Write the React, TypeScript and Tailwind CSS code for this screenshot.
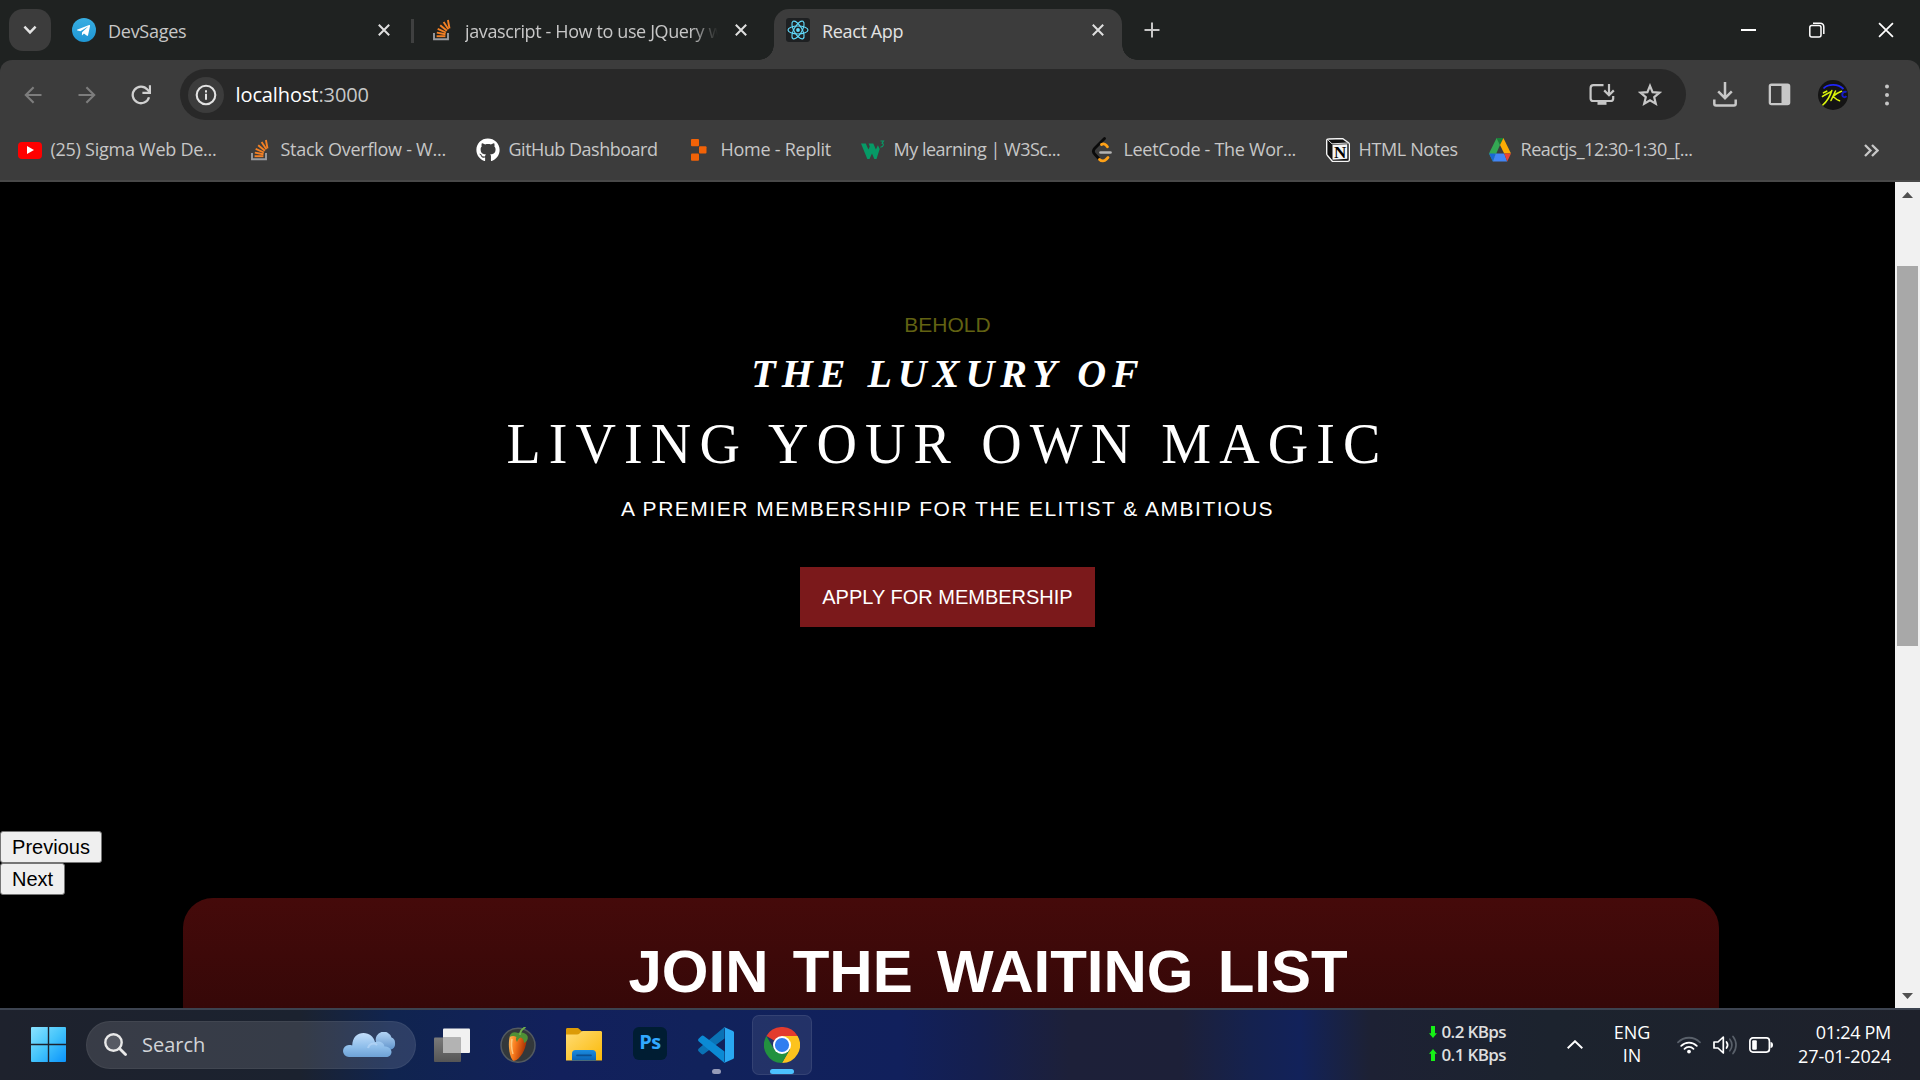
import type { ReactNode } from "react";
import { FaGithub, FaTelegramPlane } from "react-icons/fa";

const UI = "font-['Open_Sans',sans-serif]";

function StackOverflowIcon() {
  return (
    <svg width="20" height="22" viewBox="0 0 20 22" fill="none">
      <path d="M2 14v6.2h14V14" stroke="#9a9ca0" strokeWidth="1.9" />
      <g stroke="#f48024" strokeWidth="1.9">
        <path d="M4.6 17.2h8.8" />
        <path d="M4.8 13.6l8.7 1.6" />
        <path d="M5.7 9.9l8.2 3.6" />
        <path d="M8.2 6.2l6.7 5.6" />
        <path d="M11.6 3l4.8 7.3" />
        <path d="M15.9 1l1.6 8.4" />
      </g>
    </svg>
  );
}

function ReactIcon() {
  return (
    <svg width="24" height="24" viewBox="0 0 24 24" fill="none" className="rounded-[3px] bg-[#1e2022]">
      <g stroke="#61dafb" strokeWidth="1.15">
        <ellipse cx="12" cy="12" rx="4" ry="10" transform="rotate(90 12 12)" />
        <ellipse cx="12" cy="12" rx="10" ry="4" transform="rotate(60 12 12)" />
        <ellipse cx="12" cy="12" rx="10" ry="4" transform="rotate(120 12 12)" />
      </g>
      <circle cx="12" cy="12" r="1.9" fill="#61dafb" />
    </svg>
  );
}

function Cross({ size = 12, color = "#dfdfdf", width = 2 }: { size?: number; color?: string; width?: number }) {
  return (
    <svg width={size} height={size} viewBox="0 0 12 12" stroke={color} strokeWidth={width} fill="none">
      <path d="M0.8 0.8l10.4 10.4M11.2 0.8L0.8 11.2" />
    </svg>
  );
}

function TabStrip() {
  return (
    <div className="flex h-[60px] bg-[#1f2221]">
      <div className="mt-[9px] ml-[9px] flex size-[42px] items-center justify-center rounded-[14px] bg-[#3c3c3c]">
        <svg width="14" height="10" viewBox="0 0 14 10" fill="none" stroke="#e3e3e3" strokeWidth="2.4">
          <path d="M1.4 1.6L7 7.4l5.6-5.8" />
        </svg>
      </div>
      <div className="flex w-[363px] items-center pl-[21px]">
        <div className="flex size-6 items-center justify-center rounded-full bg-gradient-to-b from-[#37aee2] to-[#1e96d4]">
          <FaTelegramPlane className="mr-[2px] size-[15px] text-white" />
        </div>
        <span className="mt-[2px] ml-3 w-[270px] text-[18px] tracking-[-0.27px] text-[#c7c7c7]">DevSages</span>
        <Cross />
      </div>
      <div className="mt-[19px] -ml-[3px] h-6 w-[3px] bg-[#3f4040]" />
      <div className="flex w-[360px] items-center pl-[18px]">
        <StackOverflowIcon />
        <div className="mt-[2px] ml-[13px] w-[254px] overflow-hidden whitespace-nowrap text-[18px] tracking-[-0.38px] text-[#c7c7c7] [mask-image:linear-gradient(to_right,black_226px,transparent_253px)]">
          javascript - How to use JQuery w
        </div>
        <div className="ml-[16px]">
          <Cross />
        </div>
      </div>
      <div className="relative mt-[9px] flex h-[51px] w-[348px] items-center rounded-t-[15px] bg-[#3c3c3c] pb-[9px] pl-3">
        <div className="absolute bottom-0 -left-[15px] size-[15px] bg-[radial-gradient(circle_at_0_0,transparent_14.5px,#3c3c3c_15px)]" />
        <div className="absolute -right-[15px] bottom-0 size-[15px] bg-[radial-gradient(circle_at_100%_0,transparent_14.5px,#3c3c3c_15px)]" />
        <ReactIcon />
        <span className="mt-[2px] ml-3 w-[270px] text-[18px] tracking-[-0.35px] text-[#e3e3e3]">React App</span>
        <Cross />
      </div>
      <div className="ml-[22px] flex items-center">
        <svg width="16" height="16" viewBox="0 0 16 16" stroke="#c7c7c7" strokeWidth="2">
          <path d="M8 0.5v15M0.5 8h15" />
        </svg>
      </div>
      <div className="ml-auto flex w-[179px] items-center pb-px">
        <div className="h-[2px] w-[15px] bg-white" />
        <svg className="ml-[53px]" width="16" height="16" viewBox="0 0 16 16" fill="none" stroke="#fff" strokeWidth="1.5">
          <rect x="0.8" y="3.5" width="11.2" height="11.5" rx="2" />
          <path d="M4 1.2h7c2.2 0 3.8 1.6 3.8 3.8v7" />
        </svg>
        <div className="ml-[53px]">
          <Cross size={16} color="#fff" width={1.3} />
        </div>
      </div>
    </div>
  );
}

function ArrowIcon({ flip = false }: { flip?: boolean }) {
  return (
    <svg width="18" height="18" viewBox="0 0 18 18" fill="none" stroke="#7d7d7d" strokeWidth="2.1" className={flip ? "-scale-x-100" : ""}>
      <path d="M17.5 9H2M9.6 1.2L1.8 9l7.8 7.8" />
    </svg>
  );
}

function Toolbar() {
  return (
    <div className="bg-[#1f2221]">
      <div className="flex h-[60px] items-start rounded-t-[12px] bg-[#3c3c3c] pt-[9px]">
        <div className="flex h-[51px] items-center">
          <div className="ml-[24px]">
            <ArrowIcon />
          </div>
          <div className="ml-[36px]">
            <ArrowIcon flip />
          </div>
          <svg className="ml-[35px]" width="20" height="20" viewBox="0 0 20 20" fill="none" stroke="#d0d0d0" strokeWidth="2.3">
            <path d="M18 12.2A8.3 8.3 0 1 1 16.4 4.6L18.6 7" />
            <path d="M19 0.3v7.6h-7.6" />
          </svg>
        </div>
        <div className="ml-[29px] flex h-[51px] w-[1506px] items-center rounded-full bg-[#282828]">
          <div className="ml-[8px] flex size-9 items-center justify-center rounded-full bg-[#3c3c3c]">
            <svg width="22" height="22" viewBox="0 0 22 22" fill="none">
              <circle cx="11" cy="11" r="9.3" stroke="#e3e3e3" strokeWidth="2.1" />
              <path d="M11 9.8v6" stroke="#e3e3e3" strokeWidth="2" />
              <path d="M11 6.2v2.2" stroke="#e3e3e3" strokeWidth="2" />
            </svg>
          </div>
          <div className="ml-[11.5px] text-[20px] tracking-[-0.1px] text-[#c7c7c7]">
            <span className="text-white">localhost</span>:3000
          </div>
          <svg className="ml-auto" width="26" height="24" viewBox="0 0 26 24" fill="none">
            <path d="M14.5 2.2H4.4C2.6 2.2 1.6 3.2 1.6 5v10.4c0 1.7 1 2.6 2.8 2.6h17c1.8 0 2.8-.9 2.8-2.6V13" stroke="#c7c7c7" strokeWidth="2.2" />
            <path d="M8.5 18h9v3.8h-9z" fill="#c7c7c7" />
            <path d="M20 1v11M15.2 7.4L20 12.2l4.8-4.8" stroke="#c7c7c7" strokeWidth="2.2" />
          </svg>
          <svg className="mr-[24px] ml-[23px]" width="24" height="24" viewBox="0 0 24 24" fill="none">
            <path d="M12 2.8l2.6 6.3 6.8.6-5.2 4.5 1.6 6.6-5.8-3.5-5.8 3.5 1.6-6.6-5.2-4.5 6.8-.6z" stroke="#c7c7c7" strokeWidth="2.2" />
          </svg>
        </div>
        <div className="flex h-[51px] items-center">
          <svg className="ml-[27px]" width="24" height="25" viewBox="0 0 24 25" fill="none" stroke="#c7c7c7" strokeWidth="2.5">
            <path d="M12 0v15.5M5.2 9.4l6.8 6.8 6.8-6.8" />
            <path d="M1.3 17.5v4.2c0 1.1.6 1.7 1.7 1.7h18c1.1 0 1.7-.6 1.7-1.7v-4.2" />
          </svg>
          <svg className="ml-[31px]" width="23" height="23" viewBox="0 0 23 23">
            <path d="M3.5.5h16A2.8 2.8 0 0 1 22.3 3.3v16.2a2.8 2.8 0 0 1-2.8 2.8h-16A2.8 2.8 0 0 1 .7 19.5V3.3A2.8 2.8 0 0 1 3.5.5zM3 3v17h10.5V3z" fill="#c7c7c7" fillRule="evenodd" />
          </svg>
          <div className="relative ml-[27px] flex size-[30px] items-center justify-center overflow-hidden rounded-full bg-[#141414]">
            <svg className="absolute inset-0" width="30" height="30" viewBox="0 0 30 30" fill="none">
              <path d="M5.500 8.500C10 3.800 20 3.500 25.500 9" stroke="#1f25f5" strokeWidth="1.8" />
              <path d="M28.500 12c-2.500-.8-4.500.6-4.200 3.200.3 2.200 2.800 2.600 4.200 1" stroke="#171cc4" strokeWidth="2" />
              <path d="M5.500 12.800l3.200-1.600M13.800 10.500c-1.500 5-5 11-9 14.500M4.500 16.500c2-1.500 6-3.500 9-5" stroke="#d9f20c" strokeWidth="1.600" strokeLinecap="round" />
              <path d="M17.500 11l-4.500 9.500M23.500 11.300c-3 1-6 3-8.500 5.200 2 1.800 4 3.500 6.500 4.200" stroke="#d9f20c" strokeWidth="1.600" strokeLinecap="round" />
            </svg>
          </div>
          <svg className="ml-[37px]" width="4" height="22" viewBox="0 0 4 22" fill="#c7c7c7">
            <circle cx="2" cy="2.6" r="2" />
            <circle cx="2" cy="11" r="2" />
            <circle cx="2" cy="19.4" r="2" />
          </svg>
        </div>
      </div>
    </div>
  );
}

function YouTubeIcon() {
  return (
    <div className="flex h-[17px] w-6 items-center justify-center rounded-[4px] bg-[#f00]">
      <svg width="7" height="8" viewBox="0 0 7 8" fill="#fff">
        <path d="M0 0l7 4-7 4z" />
      </svg>
    </div>
  );
}

function ReplitIcon() {
  return (
    <svg width="24" height="22" viewBox="0 0 24 22" fill="#f26207">
      <rect x="3" y="0" width="8" height="7.2" rx="1" />
      <rect x="11" y="7.200" width="7.5" height="7.3" rx="1" />
      <rect x="3" y="14.500" width="8" height="7.2" rx="1" />
    </svg>
  );
}

function W3Icon() {
  return (
    <svg width="24" height="20" viewBox="0 0 24 20" fill="#069a66">
      <path d="M0 3.5h4.800l2.600 6 1.400-3-1.200-3h4.700l2.600 6 2-4.200 1.800 3.700L15.500 19h-2.200l-2.300-5.500L8.500 19H6.300z" />
      <path d="M19.500 1h3l-1.400 2.200c1.900.3 1.900 3.800-1.700 4" fill="none" stroke="#069a66" strokeWidth="1.100" />
    </svg>
  );
}

function LeetCodeIcon() {
  return (
    <svg width="24" height="26" viewBox="0 0 24 26" fill="none" strokeLinecap="round">
      <path d="M13.5 1.5L3.8 11.2c-1.8 1.9-1.8 4.2 0 6l3.7 4" stroke="#0a0a0a" strokeWidth="2.8" />
      <path d="M10.500 7.500c1.500-.9 3.300-.6 4.600.7l1.400 1.600" stroke="#ffa116" strokeWidth="2.8" />
      <path d="M8.500 22.500c2.200 2.200 4.900 1.700 6.800-.2l1.700-1.700" stroke="#ffa116" strokeWidth="2.8" />
      <path d="M9.5 15.500h10" stroke="#b3b3b3" strokeWidth="2.6" />
    </svg>
  );
}

function NotionIcon() {
  return (
    <div className="relative size-6">
      <svg width="24" height="24" viewBox="0 0 24 24">
        <path d="M2.5 1l14-.5 6 4.200c.6.5.9 1 .9 1.800v15.200c0 .9-.6 1.500-1.500 1.600l-15.400.2-5-6C1 17.200.7 16.500.7 15.500V2.500C.7 1.600 1.500 1 2.500 1z" fill="#111" stroke="#f5f5f5" strokeWidth="1.4" />
        <path d="M2.200 2.200L6 5.800l16-.8" stroke="#ddd" fill="none" />
        <path d="M6.500 6.800l14.800-.6v14.600l-14.800.9z" fill="#f5f5f5" />
      </svg>
      <span className="absolute top-[4.5px] left-[8px] font-['Liberation_Serif',serif] text-[17px] leading-[19px] font-bold text-black">N</span>
    </div>
  );
}

function DriveIcon() {
  return (
    <svg width="24" height="24" viewBox="0 0 24 24">
      <path d="M8.6 0h6.800L12 7z" fill="#188038" />
      <path d="M8.6 0L12 7 4.800 23.500 1 15.500z" fill="#34a853" />
      <path d="M15.400 0L12 7l4.200 8.500H23z" fill="#fbac04" />
      <path d="M1 15.500h6.800l-3 8z" fill="#1967d2" />
      <path d="M7.800 15.500h8.400l3 8H4.800z" fill="#4285f4" />
      <path d="M16.200 15.500H23l-3.800 8z" fill="#ea4335" />
    </svg>
  );
}

function Bookmark({ icon, label, className }: { icon: ReactNode; label: string; className: string }) {
  return (
    <div className={`flex items-center whitespace-nowrap ${className}`}>
      <div className="flex w-6 shrink-0 justify-center">{icon}</div>
      <span className="mb-[2px] ml-[8.5px] text-[18px]">{label}</span>
    </div>
  );
}

function BookmarksBar() {
  return (
    <div className="flex h-[62px] items-center border-b-2 border-[#484848] bg-[#3c3c3c] pl-[18px] text-[#c7c7c7]">
      <Bookmark className="w-[230px] tracking-[-0.26px]" icon={<YouTubeIcon />} label="(25) Sigma Web De..." />
      <Bookmark className="w-[228px] tracking-[-0.26px]" icon={<StackOverflowIcon />} label="Stack Overflow - W..." />
      <Bookmark className="w-[212px] tracking-[-0.5px]" icon={<FaGithub className="size-6 text-white" />} label="GitHub Dashboard" />
      <Bookmark className="w-[173px] tracking-[-0.25px]" icon={<ReplitIcon />} label="Home - Replit" />
      <Bookmark className="w-[230px] tracking-[-0.5px]" icon={<W3Icon />} label="My learning | W3Sc..." />
      <Bookmark className="w-[235px] tracking-[-0.32px]" icon={<LeetCodeIcon />} label="LeetCode - The Wor..." />
      <Bookmark className="w-[162px] tracking-[-0.36px]" icon={<NotionIcon />} label="HTML Notes" />
      <Bookmark className="w-[220px] tracking-[-0.46px]" icon={<DriveIcon />} label="Reactjs_12:30-1:30_[..." />
      <svg className="mr-[41px] ml-auto" width="15" height="13" viewBox="0 0 15 13" fill="none" stroke="#c7c7c7" strokeWidth="2.3">
        <path d="M1 1l5.5 5.5L1 12M8 1l5.5 5.5L8 12" />
      </svg>
    </div>
  );
}

function Page() {
  return (
    <div className="flex h-[826px] overflow-hidden bg-black">
      <div className="w-[1895px] font-['Liberation_Sans',Arial,sans-serif]">
        <div className="flex h-[649px] flex-col items-center pt-[131px] text-white">
          <p className="text-[21px] leading-6 text-[#626212]">BEHOLD</p>
          <h3 className="mt-[13px] pl-px font-['Liberation_Serif',serif] text-[40px] leading-[48px] font-bold tracking-[6px] italic">THE LUXURY OF</h3>
          <h1 className="mt-[14px] font-['Liberation_Serif',serif] text-[56px] leading-[64px] tracking-[8.1px]">LIVING YOUR OWN MAGIC</h1>
          <p className="mt-[21px] text-[21px] leading-6 tracking-[1.5px]">A PREMIER MEMBERSHIP FOR THE ELITIST &amp; AMBITIOUS</p>
          <button className="mt-[46px] h-[60px] w-[295px] bg-[#7b191b] pb-px text-[20px] text-white">APPLY FOR MEMBERSHIP</button>
        </div>
        <div className="flex flex-col items-start text-[20px] leading-[28px] text-black">
          <button className="h-8 w-[102px] rounded-[3px] border border-[#767676] bg-[#efefef]">Previous</button>
          <button className="h-8 w-[65px] rounded-[3px] border border-[#767676] bg-[#efefef]">Next</button>
        </div>
        <div className="mt-[3px] ml-[183px] h-[400px] w-[1536px] rounded-[30px] bg-[linear-gradient(180deg,#450a0a_0px,#360808_110px)] pt-10 pl-[445.5px]">
          <h2 className="text-[60px] leading-[68px] font-bold whitespace-nowrap text-white [word-spacing:7.5px]">JOIN THE WAITING LIST</h2>
        </div>
      </div>
      <div className="flex w-[25px] flex-col items-center bg-[#f1f1f1]">
        <svg className="mt-[10px]" width="11" height="6" viewBox="0 0 11 6" fill="#505050">
          <path d="M0 6L5.5 0 11 6z" />
        </svg>
        <div className="mt-[68px] h-[380px] w-[21px] bg-[#a8a8a8]" />
        <svg className="mt-auto mb-[9px]" width="11" height="6" viewBox="0 0 11 6" fill="#505050">
          <path d="M0 0l5.5 6L11 0z" />
        </svg>
      </div>
    </div>
  );
}

function CloudIcon() {
  return (
    <svg width="54" height="26" viewBox="0 0 54 26">
      <defs>
        <linearGradient id="cloudFront" x1="0" y1="0" x2="0" y2="1">
          <stop offset="0" stopColor="#c3defa" />
          <stop offset="0.6" stopColor="#8dbdea" />
          <stop offset="1" stopColor="#6ea2d6" />
        </linearGradient>
        <linearGradient id="cloudBack" x1="0" y1="0" x2="0" y2="1">
          <stop offset="0" stopColor="#b5d5f5" />
          <stop offset="1" stopColor="#5f93cb" />
        </linearGradient>
      </defs>
      <path d="M33 10a8 8 0 0 1 15.5-4.500A5.500 5.500 0 0 1 52 11a6 6 0 0 1-4 6.500L36 18z" fill="url(#cloudBack)" />
      <path d="M6 25a6 6 0 0 1 0-12c1 0 2.500.1 3.200.5C9.500 5 14.500 1 20.500 1c6 0 10 3.500 11.500 9 3.500-1.500 9 0 9.500 4.500 4.500 0 7 2.500 7 5.500s-2.500 5-5.500 5z" fill="url(#cloudFront)" />
      <path d="M25 16c1-4 6-6 9-3" stroke="#b6d6f6" strokeWidth="2" fill="none" opacity="0.7" />
    </svg>
  );
}

function FruityIcon() {
  return (
    <svg width="36" height="36" viewBox="0 0 36 36">
      <defs>
        <linearGradient id="fruit" x1="0" y1="0" x2="1" y2="0.3">
          <stop offset="0" stopColor="#ffc05c" />
          <stop offset="0.45" stopColor="#f97a1c" />
          <stop offset="1" stopColor="#a93205" />
        </linearGradient>
      </defs>
      <circle cx="18" cy="18.2" r="17" fill="#33383b" stroke="#535a60" strokeWidth="1.5" />
      <path d="M10 9c-2 5-1.500 19 2.500 24 1 1.200 2.500 1 4 0 6-4 10.500-14 10-22-4-5-13-5.500-16.500-2z" fill="url(#fruit)" />
      <path d="M12 12c-1 5-.5 10 1 15" stroke="#ffdf9f" strokeWidth="1.5" fill="none" opacity="0.7" />
      <path d="M18 6c-4-2-8 0-8.500 4 3-1.500 5-1 7 0-1 1.500-.5 3.500.5 5 1-2.500 2-4 4-4.500 2 1 3 3 3 5.500 3-1.500 4.500-4 3.500-7-1.500-3-5.500-4.500-9.500-3z" fill="#4f8f35" />
      <path d="M20 8c0-3 2-6 5.500-8" stroke="#6fb04a" strokeWidth="1.8" fill="none" />
    </svg>
  );
}

function FolderIcon() {
  return (
    <svg width="36" height="33" viewBox="0 0 36 33">
      <defs>
        <linearGradient id="folder" x1="0" y1="0" x2="1" y2="1">
          <stop offset="0" stopColor="#ffdc75" />
          <stop offset="1" stopColor="#fbb907" />
        </linearGradient>
        <linearGradient id="folderTray" x1="0" y1="0" x2="0" y2="1">
          <stop offset="0" stopColor="#1b8ce0" />
          <stop offset="1" stopColor="#0a63b5" />
        </linearGradient>
      </defs>
      <path d="M0 1.500C0 .7.500 0 1.500 0H11c1 0 1.500.3 2.200 1L16 3.500V8H0z" fill="#dc9b07" />
      <path d="M0 6.500h11c1 0 1.800-.4 2.500-1l1.500-1.600c.6-.6 1.200-.9 2-.9h17.500c1 0 1.500.6 1.500 1.500V32.500H0z" fill="url(#folder)" />
      <path d="M6 32.500V25.500C6 23.300 7.300 22 9.500 22h17c2.200 0 3.500 1.300 3.500 3.500v7z" fill="url(#folderTray)" />
      <path d="M11 27.300h14" stroke="#0b4f91" strokeWidth="1.7" strokeLinecap="round" />
    </svg>
  );
}

function VsCodeIcon() {
  return (
    <svg width="36" height="36" viewBox="0 0 36 36">
      <path d="M26.500 0v11.500L6.200 26.800c-1 .8-2 .8-3 0L.8 24.600c-1-1-1-2 0-3z" fill="#0a72b5" />
      <path d="M26.500 36V24.500L6.200 9.200c-1-.8-2-.8-3 0L.8 11.400c-1 1-1 2 0 3z" fill="#0b8ad4" />
      <path d="M26 0l9 4c.7.4 1 .8 1 1.500v25c0 .7-.3 1.200-1 1.500l-9 4c.6-.5 1-1.200 1-2V2c0-.8-.3-1.500-1-2z" fill="#29a8f2" />
    </svg>
  );
}

function ChromeIcon() {
  return (
    <svg width="36" height="36" viewBox="0 0 36 36">
      <path d="M18 18L2.400 9A18 18 0 0 1 33.600 9z" fill="#e33b2e" />
      <path d="M18 9h15.600A18 18 0 0 1 18 36l7.800-13.500z" fill="#fcc31e" />
      <path d="M10.200 22.500L2.400 9A18 18 0 0 0 18 36l7.800-13.500z" fill="#22913f" />
      <circle cx="18" cy="18" r="9" fill="#fff" />
      <circle cx="18" cy="18" r="7.1" fill="#2f7df0" />
    </svg>
  );
}

function NetLine({ up = false, label }: { up?: boolean; label: string }) {
  return (
    <div className="flex h-[23px] items-center">
      <svg width="8" height="12" viewBox="0 0 8 12" fill="#16f016" className={up ? "" : "rotate-180"}>
        <path d="M4 0l4 4.800H6V12H2V4.800H0z" />
      </svg>
      <span className="ml-[4.5px]">{label}</span>
    </div>
  );
}

function Taskbar() {
  return (
    <div className="flex h-[72px] items-center border-t-2 border-[#3c4350] bg-[linear-gradient(90deg,#1e222d_0px,#1b222f_300px,#10244f_390px,#12205c_560px,#11225b_700px,#11205c_900px,#151f4e_980px,#1d2039_1070px,#1d2038_1180px,#15224f_1250px,#12225a_1300px,#1d2134_1370px,#1c232e_1550px,#1e212b_1920px)] pb-px text-white">
      <svg className="ml-[31px]" width="35" height="35" viewBox="0 0 35 35">
        <defs>
          <linearGradient id="start" x1="0" y1="0" x2="1" y2="1">
            <stop offset="0" stopColor="#8be3ff" />
            <stop offset="0.5" stopColor="#44c4fb" />
            <stop offset="1" stopColor="#0a93fb" />
          </linearGradient>
        </defs>
        <path d="M1 0h15.800v16.800H0V1a1 1 0 0 1 1-1zM18.200 0H34a1 1 0 0 1 1 1v15.800H18.200zM0 18.200h16.800V35H1a1 1 0 0 1-1-1zM18.200 18.200H35V34a1 1 0 0 1-1 1H18.200z" fill="url(#start)" />
      </svg>
      <div className="ml-[20px] flex h-12 w-[330px] items-center rounded-full border border-white/5 bg-white/12">
        <svg className="ml-[17px]" width="23" height="23" viewBox="0 0 23 23" fill="none" stroke="#e9e9e9">
          <circle cx="9.5" cy="9.5" r="8.2" strokeWidth="2.4" fill="#ffffff28" />
          <path d="M15.500 15.500l6 6" strokeWidth="2.8" strokeLinecap="round" />
        </svg>
        <span className="ml-[15px] text-[20px] text-[#d2d4d8]">Search</span>
        <div className="mr-[18px] ml-auto">
          <CloudIcon />
        </div>
      </div>
      <svg className="ml-[18px]" width="36" height="34" viewBox="0 0 36 34">
        <defs>
          <linearGradient id="paneBack" x1="0" y1="0" x2="0" y2="1">
            <stop offset="0" stopColor="#7a7a7a" />
            <stop offset="1" stopColor="#555" />
          </linearGradient>
        </defs>
        <rect x="9" y="0.5" width="27" height="24.5" rx="1" fill="#f1f1f1" />
        <rect x="0" y="9.5" width="27" height="24.5" rx="1" fill="url(#paneBack)" />
        <rect x="9" y="9.5" width="18" height="15.5" fill="#b3b3b3" />
      </svg>
      <div className="ml-[30px]">
        <FruityIcon />
      </div>
      <div className="ml-[30px]">
        <FolderIcon />
      </div>
      <div className="mb-[2px] ml-[31px] flex h-[33px] w-[34px] items-center justify-center rounded-[6px] bg-[#001d33] pb-[3px] text-[20px] leading-none font-bold tracking-[-0.5px] text-[#31a8ff]">Ps</div>
      <div className="relative ml-[31px]">
        <VsCodeIcon />
        <div className="absolute top-[42px] left-[14px] h-[5px] w-[9px] rounded-full bg-[#969bb8]" />
      </div>
      <div className="relative ml-[18px] flex size-[60px] items-center justify-center rounded-[7px] border border-white/8 bg-white/8">
        <ChromeIcon />
        <div className="absolute bottom-0 left-[17px] h-[5px] w-6 rounded-full bg-[#4cc2ff]" />
      </div>
      <div className="mb-[2px] ml-auto w-[138px] text-[17px] font-semibold tracking-[-0.62px] text-[#dedede]">
        <NetLine label="0.2 KBps" />
        <NetLine up label="0.1 KBps" />
      </div>
      <svg width="16" height="9" viewBox="0 0 16 9" fill="none" stroke="#fff" strokeWidth="1.9">
        <path d="M0.7 8.300L8 1.200l7.300 7.100" />
      </svg>
      <div className="mb-px ml-[30px] w-[38px] text-center text-[18px] leading-[23px]">
        <div>ENG</div>
        <div>IN</div>
      </div>
      <svg className="ml-[26px]" width="24" height="18" viewBox="0 0 24 18" fill="none" strokeLinecap="round" strokeWidth="1.8">
        <path d="M1 6.300a15.600 15.600 0 0 1 22 0" stroke="#59606a" />
        <path d="M4.200 9.800a11 11 0 0 1 15.600 0" stroke="#fff" />
        <path d="M7.500 12.800a6.400 6.400 0 0 1 9 0" stroke="#fff" />
        <circle cx="12" cy="15.6" r="1.9" fill="#fff" />
      </svg>
      <svg className="ml-[12px]" width="25" height="20" viewBox="0 0 25 20" fill="none" strokeLinecap="round" strokeLinejoin="round" strokeWidth="1.7">
        <path d="M1 7v6h4l5.300 5V2L5 7z" stroke="#fff" />
        <path d="M13.500 7a5 5 0 0 1 0 6" stroke="#fff" />
        <path d="M16.800 4.200a9 9 0 0 1 0 11.600M20 1.500a13.500 13.500 0 0 1 0 17" stroke="#59606a" />
      </svg>
      <svg className="ml-[11px]" width="24" height="16" viewBox="0 0 24 16" fill="none">
        <rect x="0.9" y="0.9" width="19.5" height="14.2" rx="3" stroke="#fff" strokeWidth="1.7" />
        <rect x="3.2" y="3.2" width="4.6" height="9.6" rx="1" fill="#fff" />
        <path d="M21.500 5v6c1.500 0 2.500-1.200 2.500-3s-1-3-2.500-3z" fill="#fff" />
      </svg>
      <div className="mr-[29px] mb-[2px] ml-[20px] w-[98px] text-right text-[18px] leading-6">
        <div className="tracking-[-0.3px]">01:24 PM</div>
        <div className="tracking-[-0.1px]">27-01-2024</div>
      </div>
    </div>
  );
}

export default function App() {
  return (
    <div className={`h-[1080px] w-[1920px] overflow-hidden bg-black ${UI}`}>
      <TabStrip />
      <Toolbar />
      <BookmarksBar />
      <Page />
      <Taskbar />
    </div>
  );
}
